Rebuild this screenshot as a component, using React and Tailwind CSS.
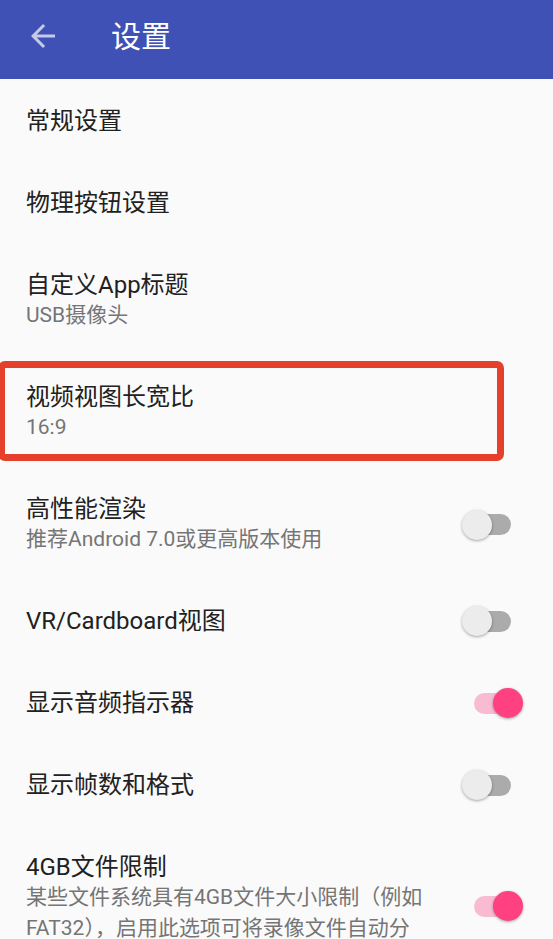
import React, { useState } from "react";

// Settings screen: toolbar + list of preferences

const Toggle = ({ on, onClick, className = "" }) => (
  <button onClick={onClick} className={`relative my-[-1px] ml-[22px] h-[30px] w-[62px] shrink-0 ${className}`}>
    <span
      className={`absolute top-[4.5px] h-[21px] w-[48px] rounded-full ${
        on ? "left-[12px] bg-[#F9BBD1]" : "left-[1px] bg-[#ABABAB]"
      }`}
    />
    <span
      className={`absolute top-0 h-[30px] w-[30px] rounded-full shadow-[0_1px_3px_rgba(0,0,0,0.35)] ${
        on ? "left-[31px] bg-[#FF4081]" : "left-0 bg-[#ECECEC]"
      }`}
    />
  </button>
);

const Row = ({ title, summary, toggle, on, onToggle, marked, last }) => (
  <div
    className={`relative flex items-center pl-[26px] pr-[29px] pt-[27px] ${
      summary ? "pb-[24px]" : "pb-[25px]"
    }`}
  >
    <div className="min-w-0 flex-1">
      <div className="h-[30px] text-[24px] leading-[30px] text-[#212121]">{title}</div>
      {summary && <div className="text-[21px] leading-[31px] text-[#757575]">{summary}</div>}
    </div>
    {toggle && <Toggle on={on} onClick={onToggle} className={last ? "self-start mt-[39px]" : ""} />}
    {/* red highlight box around the aspect ratio item */}
    {marked && (
      <div className="pointer-events-none absolute left-[-2px] top-[6px] h-[100px] w-[506px] rounded-[7px] border-[7px] border-[#E5402B]" />
    )}
  </div>
);

export default function App() {
  const [toggles, setToggles] = useState({ hq: false, vr: false, audio: true, fps: false, fat: true });
  const flip = (k) => setToggles((t) => ({ ...t, [k]: !t[k] }));

  return (
    <div className="h-[939px] overflow-hidden bg-[#FAFAFA] font-[Roboto,'Noto_Sans_CJK_SC',sans-serif]">
      {/* Toolbar */}
      <div className="flex h-[79px] items-center bg-[#3F51B5] pb-[5px]">
        <svg viewBox="0 0 24 24" className="ml-[25px] mt-[-2px] h-[36px] w-[36px] fill-[#C5CAE9]">
          <path d="M20 11H7.83l5.59-5.59L12 4l-8 8 8 8 1.41-1.41L7.83 13H20v-2z" />
        </svg>
        <h1 className="ml-[50px] text-[30px] leading-none text-white">设置</h1>
      </div>

      <Row title="常规设置" />
      <Row title="物理按钮设置" />
      <Row title="自定义App标题" summary="USB摄像头" />
      <Row title="视频视图长宽比" summary="16:9" marked />
      <Row title="高性能渲染" summary="推荐Android 7.0或更高版本使用" toggle on={toggles.hq} onToggle={() => flip("hq")} />
      <Row title="VR/Cardboard视图" toggle on={toggles.vr} onToggle={() => flip("vr")} />
      <Row title="显示音频指示器" toggle on={toggles.audio} onToggle={() => flip("audio")} />
      <Row title="显示帧数和格式" toggle on={toggles.fps} onToggle={() => flip("fps")} />
      <Row
        title="4GB文件限制"
        summary="某些文件系统具有4GB文件大小限制（例如FAT32），启用此选项可将录像文件自动分割。"
        toggle
        on={toggles.fat}
        onToggle={() => flip("fat")}
        last
      />
    </div>
  );
}
